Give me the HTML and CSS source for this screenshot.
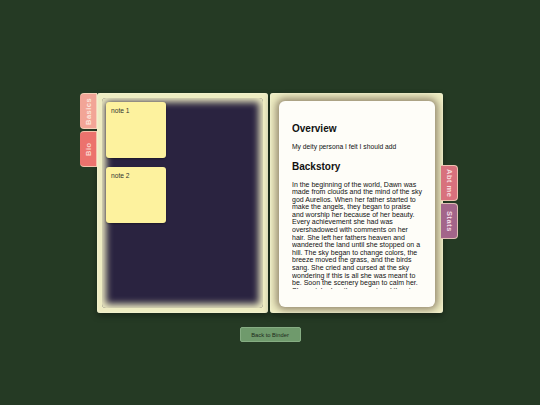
FILE: index.html
```html
<!DOCTYPE html>
<html>
<head>
    <title>Dawn - Binder</title>
    <link rel="stylesheet" href="styles.css">
</head>
<body>
    <div id="stage">
        <div class="binder">
            <div class="tabs tabs-left">
                <div class="tab tab-basics">Basics</div>
                <div class="tab tab-bio">Bio</div>
            </div>
            <div class="page page-left">
                <div class="board">
                    <div class="note">note 1</div>
                    <div class="note">note 2</div>
                </div>
            </div>
            <div class="page page-right">
                <div class="sheet">
                    <div class="sheet-scroll">
                        <h2>Overview</h2>
                        <p class="summary">My deity persona I felt I should add</p>
                        <h2>Backstory</h2>
                        <p class="story">In the beginning of the world, Dawn was made from clouds and the mind of the sky god Aurelios. When her father started to make the angels, they began to praise and worship her because of her beauty. Every achievement she had was overshadowed with comments on her hair. She left her fathers heaven and wandered the land until she stopped on a hill. The sky began to change colors, the breeze moved the grass, and the birds sang. She cried and cursed at the sky wondering if this is all she was meant to be. Soon the scenery began to calm her. She watched as the sun set and the stars came out, and she decided that she would make the world as beautiful as that evening.</p>
                    </div>
                </div>
            </div>
            <div class="tabs tabs-right">
                <div class="tab tab-about">Abt me</div>
                <div class="tab tab-stats">Stats</div>
            </div>
        </div>
        <button class="back-button">Back to Binder</button>
    </div>
</body>
</html>
```

FILE: styles.css
```css
body {
    margin: 0;
    background-color: #253a24;
    font-family: "Liberation Sans", Arial, sans-serif;
}
#stage {
    display: flex;
    flex-direction: column;
    align-items: center;
    padding-top: 93px;
}
.binder {
    display: flex;
    align-items: flex-start;
}
/* Side tabs */
.tabs {
    display: flex;
    flex-direction: column;
    gap: 2px;
    width: 17px;
}
.tabs-right {
    margin-top: 72px;
    margin-left: -2px;
    margin-right: 2px;
}
.tab {
    height: 36px;
    box-sizing: border-box;
    display: flex;
    align-items: center;
    justify-content: center;
    writing-mode: vertical-rl;
    font-size: 7.5px;
    font-weight: bold;
    letter-spacing: 0.5px;
    border: 1px solid rgba(250, 230, 200, 0.7);
}
/* left tabs read bottom to top */
.tabs-left .tab {
    border-right: none;
    transform: rotate(180deg);
    border-radius: 0 4px 4px 0;
}
.tabs-right .tab {
    border-radius: 0 4px 4px 0;
    border-left: none;
}
.tab-basics {
    background-color: #f2a597;
    color: #fde6dc;
}
.tab-bio {
    background-color: #ec726d;
    color: #fbd8d0;
}
.tab-about {
    background-color: #d8717d;
    color: #f9dade;
}
.tab-stats {
    background-color: #a3658a;
    color: #f3dbe6;
}
/* Pages */
.page {
    height: 220px;
    box-sizing: border-box;
    background-color: #eeecc2;
    border-radius: 3px;
    box-shadow: 0 3px 6px rgba(0, 0, 0, 0.35), inset 0 0 2px #fbfae2;
}
.page-left {
    width: 171px;
    padding: 5px;
    margin-right: 2px;
}
.page-right {
    width: 173px;
    padding: 8px 8px 6px 9px;
}
.board {
    height: 100%;
    box-sizing: border-box;
    padding: 4px;
    display: flex;
    flex-direction: column;
    gap: 9px;
    background-color: #2a2340;
    border-radius: 4px;
    box-shadow: inset 0 0 7px 4px #eeecc2;
}
.note {
    width: 60px;
    height: 56px;
    box-sizing: border-box;
    padding: 5px;
    background-color: #fdf29e;
    border-radius: 3px;
    box-shadow: 0 1px 2px rgba(0, 0, 0, 0.35);
    color: #333;
    font-size: 6.7px;
}
.sheet {
    height: 100%;
    box-sizing: border-box;
    padding: 13px 12px 18px 13px;
    background-color: #fefdf8;
    border-radius: 6px;
    box-shadow: 0 0 7px 3px rgba(80, 62, 50, 0.55);
}
.sheet-scroll {
    height: 100%;
    overflow: hidden;
    color: #111;
}
.sheet-scroll h2 {
    font-size: 10px;
    margin: 8.5px 0 9px;
}
.summary {
    font-size: 6.72px;
    margin: 7px 0 11px;
}
.story {
    font-size: 7px;
    line-height: 7.6px;
    margin: 7px 0;
}
/* Button under the binder */
.back-button {
    margin-top: 14px;
    width: 61px;
    height: 15px;
    padding: 0;
    background-color: #6f9a6c;
    border: 1px solid #86ad83;
    border-radius: 2px;
    color: #1c2a1b;
    font-family: "Liberation Sans", Arial, sans-serif;
    font-size: 5.8px;
}
```
